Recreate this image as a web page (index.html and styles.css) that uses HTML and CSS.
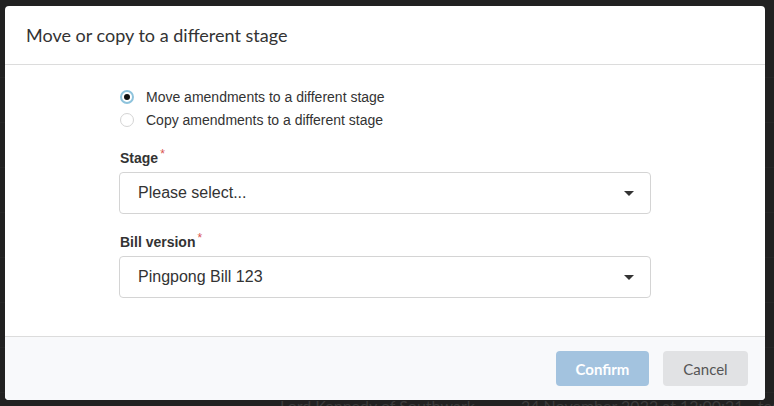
FILE: index.html
```html
<!DOCTYPE html>
<html lang="en">
<head>
    <meta charset="UTF-8">
    <meta name="viewport" content="width=device-width, initial-scale=1.0">
    <title>Move or copy</title>
    <link rel="stylesheet" href="styles.css">
</head>
<body>
    <!-- page behind the overlay -->
    <div class="page">
        <div class="page-row"></div>
        <div class="page-row"></div>
        <div class="page-row"></div>
        <div class="page-row"></div>
        <div class="page-row"></div>
        <div class="page-row"></div>
        <div class="page-row"></div>
        <div class="page-row"></div>
        <div class="page-row last">
            <span class="cell-name">Lord Kennedy of Southwark</span>
            <span class="cell-date">24 November 2022 at 12:00:21 - tested</span>
        </div>
    </div>

    <div class="backdrop">
        <div class="modal">
            <div class="modal-header">
                <h2>Move or copy to a different stage</h2>
            </div>
            <div class="modal-body">
                <div class="form">
                    <div class="radios">
                        <label class="radio">
                            <span class="radio-dot checked"></span>
                            Move amendments to a different stage
                        </label>
                        <label class="radio">
                            <span class="radio-dot"></span>
                            Copy amendments to a different stage
                        </label>
                    </div>

                    <div class="field">
                        <div class="field-label">Stage<span class="req">*</span></div>
                        <div class="select">
                            <span>Please select...</span>
                            <span class="caret"></span>
                        </div>
                    </div>

                    <div class="field">
                        <div class="field-label">Bill version<span class="req">*</span></div>
                        <div class="select">
                            <span>Pingpong Bill 123</span>
                            <span class="caret"></span>
                        </div>
                    </div>
                </div>
            </div>
            <div class="modal-footer">
                <button class="btn btn-confirm" disabled>Confirm</button>
                <button class="btn btn-cancel">Cancel</button>
            </div>
        </div>
    </div>
</body>
</html>
```

FILE: styles.css
```css
html, body {
    overflow: hidden;
}
body {
    margin: 0;
    background: #212121;
    font-family: Arial, "Liberation Sans", sans-serif;
    height: 406px;
    position: relative;
}
.page {
    height: 406px;
    overflow: hidden;
    box-sizing: border-box;
    padding-top: 33px;
}
.page-row {
    height: 44px;
    border-bottom: 1px solid #262626;
}
.page-row.last {
    border-bottom: none;
    padding-top: 3px;
    font-family: Lato, sans-serif;
    font-size: 16px;
    color: #3b3b3b;
    white-space: nowrap;
}
.cell-name {
    margin-left: 280px;
}
.cell-date {
    margin-left: 42px;
}

.backdrop {
    position: absolute;
    inset: 0;
    padding: 6px 9px 0 5px;
}
.modal {
    background: #fff;
    border-radius: 4px;
    overflow: hidden;
    height: 394px;
    display: flex;
    flex-direction: column;
}
.modal-header {
    height: 58px;
    border-bottom: 1px solid #dcdcdc;
    display: flex;
    align-items: center;
    padding-left: 21px;
}
.modal-header h2 {
    margin: 0;
    font-family: Lato, sans-serif;
    font-weight: normal;
    font-size: 18px;
    color: #333;
}
.modal-body {
    flex: 1;
    padding-top: 20px;
}
.form {
    width: 532px;
    margin: 0 auto;
}
.radios {
    padding-left: 1px;
    margin-bottom: 16px;
}
.radio {
    display: flex;
    align-items: center;
    font-size: 14px;
    color: #333;
    height: 23px;
}
.radio-dot {
    width: 12px;
    height: 12px;
    border: 1px solid #d4d4d4;
    border-radius: 50%;
    margin-right: 12px;
    position: relative;
    box-sizing: content-box;
}
.radio-dot.checked {
    border: 2px solid #8ec3dc;
    width: 10px;
    height: 10px;
}
.radio-dot.checked::after {
    content: "";
    position: absolute;
    left: 2px;
    top: 2px;
    width: 6px;
    height: 6px;
    border-radius: 50%;
    background: #111;
}
.field {
    margin-bottom: 17px;
}
.field-label {
    font-size: 14px;
    font-weight: bold;
    color: #333;
    margin-bottom: 6px;
    padding-left: 1px;
}
.req {
    color: #d9534f;
    font-size: 12px;
    font-weight: normal;
    vertical-align: 5px;
    margin-left: 2px;
}
.select {
    height: 40px;
    border: 1px solid #d4d4d4;
    border-radius: 4px;
    display: flex;
    align-items: center;
    justify-content: space-between;
    padding: 0 16px 0 18px;
    font-size: 16px;
    color: #333;
}
.caret {
    width: 0;
    height: 0;
    border-left: 5px solid transparent;
    border-right: 5px solid transparent;
    border-top: 5px solid #333;
}

.modal-footer {
    height: 63px;
    border-top: 1px solid #dcdcdc;
    background: #f8f9fb;
    display: flex;
    align-items: center;
    justify-content: flex-end;
    gap: 14px;
    padding-right: 17px;
}
.btn {
    height: 35px;
    border: none;
    border-radius: 4px;
    font-family: Lato, sans-serif;
    font-size: 15px;
}
.btn-confirm {
    width: 93px;
    background: #a3c3df;
    color: #fff;
    font-weight: bold;
}
.btn-cancel {
    width: 85px;
    background: #e1e2e4;
    color: #555;
}
```
